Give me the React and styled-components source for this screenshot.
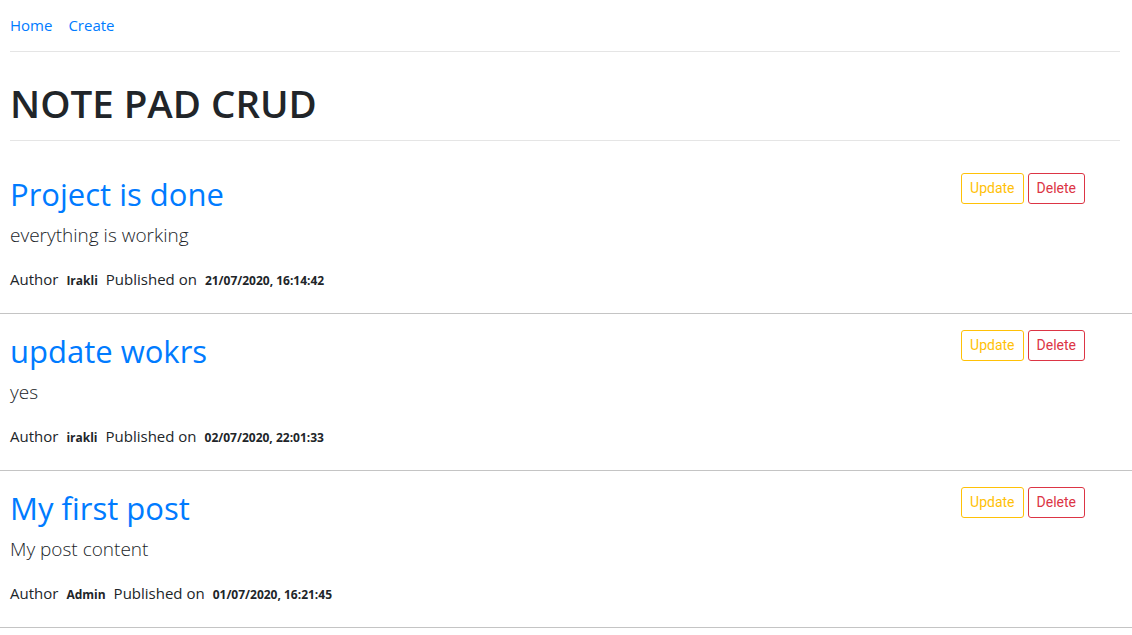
import React from "react";
import styled, { createGlobalStyle } from "styled-components";

const GlobalStyle = createGlobalStyle`
  body {
    margin: 0;
    background: #fff;
    color: #212529;
    font-family: "Open Sans", "Noto Sans", sans-serif;
    font-size: 16px;
    line-height: 1.5;
  }
  * { box-sizing: border-box; }
`;

const Header = styled.div`
  padding: 0 12px 0 10px;
`;

const Nav = styled.nav`
  display: flex;
  gap: 16px;
  padding: 13px 0 14px;
`;

const NavLink = styled.a`
  color: #007bff;
  font-size: 15px;
  text-decoration: none;
  line-height: 24px;
`;

const Rule = styled.hr`
  margin: 0;
  border: 0;
  border-top: 1px solid rgba(0, 0, 0, 0.1);
`;

const Title = styled.h1`
  margin: 0;
  padding: 28px 0 14px;
  font-size: 38.5px;
  font-weight: 600;
  line-height: 1.2;
  color: #212529;
`;

const Post = styled.div`
  padding: 16px 47px 0 10px;
  height: 157px;
  border-bottom: 1px solid #c4c4c4;
`;

const FirstGap = styled.div`
  height: 16px;
`;

const Row = styled.div`
  display: flex;
  justify-content: space-between;
  align-items: flex-start;
`;

const PostTitle = styled.h2`
  margin: 3px 0 8px;
  font-size: 31px;
  font-weight: 500;
  line-height: 1.2;
  color: #007bff;
`;

const Actions = styled.div`
  display: flex;
  gap: 4px;
`;

const Button = styled.button`
  font-family: Roboto, "Noto Sans", sans-serif;
  font-size: 14px;
  line-height: 21px;
  padding: 4px 8px;
  background: transparent;
  border: 1px solid ${(p) => p.color};
  color: ${(p) => p.color};
  border-radius: 3px;
  cursor: pointer;
`;

const Content = styled.p`
  margin: 0 0 17px;
  font-size: 19px;
  font-weight: 300;
  line-height: 1.5;
`;

const Meta = styled.div`
  font-size: 15px;
  line-height: 24px;
`;

const Strong = styled.b`
  font-size: 12px;
  font-weight: 700;
  margin: 0 8px;
`;

const posts = [
  { title: "Project is done", content: "everything is working", author: "Irakli", date: "21/07/2020, 16:14:42" },
  { title: "update wokrs", content: "yes", author: "irakli", date: "02/07/2020, 22:01:33" },
  { title: "My first post", content: "My post content", author: "Admin", date: "01/07/2020, 16:21:45" },
];

export default function App() {
  return (
    <>
      <GlobalStyle />
      <Header>
        <Nav>
          <NavLink href="#">Home</NavLink>
          <NavLink href="#">Create</NavLink>
        </Nav>
        <Rule />
        <Title>NOTE PAD CRUD</Title>
        <Rule />
      </Header>
      <FirstGap />
      {posts.map((p) => (
        <Post key={p.title}>
          <Row>
            <PostTitle>{p.title}</PostTitle>
            <Actions>
              <Button color="#ffc107">Update</Button>
              <Button color="#dc3545">Delete</Button>
            </Actions>
          </Row>
          <Content>{p.content}</Content>
          <Meta>
            Author<Strong>{p.author}</Strong>Published on<Strong>{p.date}</Strong>
          </Meta>
        </Post>
      ))}
    </>
  );
}
